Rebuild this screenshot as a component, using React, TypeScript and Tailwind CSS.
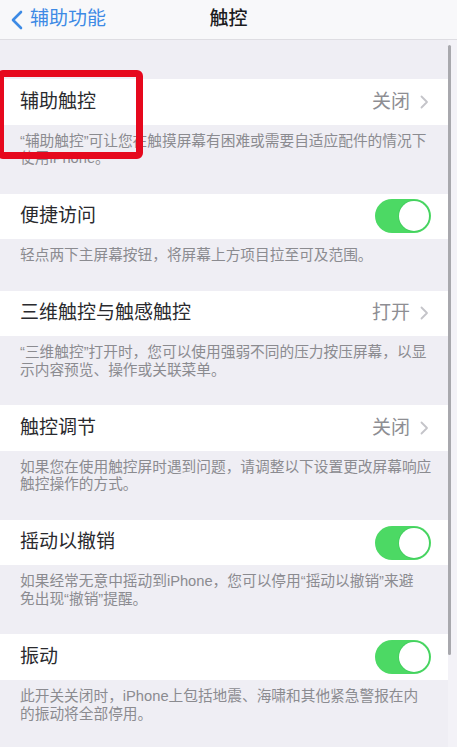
import React from 'react';

type Item = {
  label: string;
  value?: string;
  toggle?: boolean;
  footer: string[];
};

const items: Item[] = [
  { label: '辅助触控', value: '关闭', footer: ['“辅助触控”可让您在触摸屏幕有困难或需要自适应配件的情况下', '使用iPhone。'] },
  { label: '便捷访问', toggle: true, footer: ['轻点两下主屏幕按钮，将屏幕上方项目拉至可及范围。'] },
  { label: '三维触控与触感触控', value: '打开', footer: ['“三维触控”打开时，您可以使用强弱不同的压力按压屏幕，以显', '示内容预览、操作或关联菜单。'] },
  { label: '触控调节', value: '关闭', footer: ['如果您在使用触控屏时遇到问题，请调整以下设置更改屏幕响应', '触控操作的方式。'] },
  { label: '摇动以撤销', toggle: true, footer: ['如果经常无意中摇动到iPhone，您可以停用“摇动以撤销”来避', '免出现“撤销”提醒。'] },
  { label: '振动', toggle: true, footer: ['此开关关闭时，iPhone上包括地震、海啸和其他紧急警报在内', '的振动将全部停用。'] },
];

const Chevron = () => (
  <svg width="9" height="14" viewBox="0 0 9 14" fill="none" className="ml-[10px]">
    <path d="M1.5 1.5 L7 7 L1.5 12.5" stroke="#c4c4c9" strokeWidth="1.8" strokeLinecap="round" strokeLinejoin="round" />
  </svg>
);

const Toggle = () => (
  <div className="flex h-[34px] w-[56px] items-center justify-end rounded-full bg-[#4cd964] pr-[2px]">
    <div className="h-[30px] w-[30px] rounded-full bg-white shadow-[0_0_0_1px_rgba(60,200,90,0.5)]" />
  </div>
);

const Row: React.FC<{ item: Item }> = ({ item }) => (
  <>
    <div className="flex h-[45.6px] items-center justify-between bg-white pl-[20px] pr-[19px]">
      <span className="text-[19px] text-[#2a2a2e]">{item.label}</span>
      {item.toggle ? (
        <div className="-mr-[2px]">
          <Toggle />
        </div>
      ) : (
        <div className="flex items-center">
          <span className="text-[19px] text-[#8e8e93]">{item.value}</span>
          <Chevron />
        </div>
      )}
    </div>
    <div className="pl-[20px] pr-[10px] pt-[8px] pb-[26px] text-[14.7px] leading-[17.5px] text-[#8b8b90] whitespace-nowrap">
      {item.footer.map((line, i) => (
        <div key={i}>{line}</div>
      ))}
    </div>
  </>
);

export default function App() {
  return (
    <div
      className="relative h-[747px] w-[457px] overflow-hidden bg-[#f3f2f7]"
      style={{ fontFamily: '"Liberation Sans", "Noto Sans CJK SC", sans-serif' }}
    >
      <div className="flex h-[40px] items-center border-b border-[#dedde2] bg-[#f8f8fa]">
        <div className="flex w-1/3 items-center pl-[10px] text-[#3d8ae5]">
          <svg width="14" height="20" viewBox="0 0 14 20" fill="none">
            <path d="M11 2 L3 10 L11 18" stroke="#3d8ae5" strokeWidth="2.6" strokeLinecap="round" strokeLinejoin="round" />
          </svg>
          <span className="ml-[6px] text-[19px]">辅助功能</span>
        </div>
        <div className="w-1/3 text-center text-[19px] font-medium text-[#1c1c1e]">触控</div>
        <div className="w-1/3" />
      </div>

      <div className="w-[448px] bg-[#efeef4] pt-[39px]">
        {items.map(item => (
          <Row key={item.label} item={item} />
        ))}
      </div>

      {/* scroll indicator */}
      <div className="absolute left-[448px] top-[45px] h-[610px] w-[3px] rounded-full bg-[#a8a8ad]" />

      {/* red highlight box */}
      <div className="absolute left-[-3px] top-[70px] h-[89px] w-[146px] rounded-[6px] border-[7px] border-[#e6081d]" />
    </div>
  );
}
